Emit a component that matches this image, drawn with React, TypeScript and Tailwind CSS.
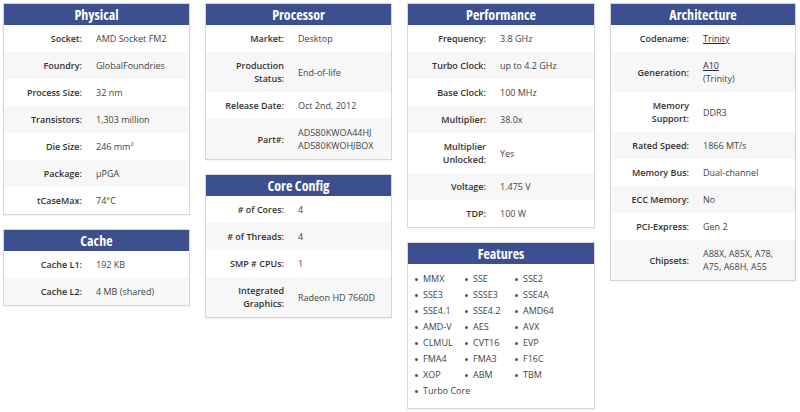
import type { ReactNode } from "react"

type Row = [ReactNode, ReactNode]

const physical: Row[] = [
  ["Socket:", "AMD Socket FM2"],
  ["Foundry:", "GlobalFoundries"],
  ["Process Size:", "32 nm"],
  ["Transistors:", "1,303 million"],
  ["Die Size:", "246 mm²"],
  ["Package:", "µPGA"],
  ["tCaseMax:", "74°C"],
]

const cache: Row[] = [
  ["Cache L1:", "192 KB"],
  ["Cache L2:", "4 MB (shared)"],
]

const processor: Row[] = [
  ["Market:", "Desktop"],
  [<>Production<br />Status:</>, "End-of-life"],
  ["Release Date:", "Oct 2nd, 2012"],
  ["Part#:", <>AD580KWOA44HJ<br />AD580KWOHJBOX</>],
]

const coreConfig: Row[] = [
  ["# of Cores:", "4"],
  ["# of Threads:", "4"],
  ["SMP # CPUs:", "1"],
  [<>Integrated<br />Graphics:</>, "Radeon HD 7660D"],
]

const performance: Row[] = [
  ["Frequency:", "3.8 GHz"],
  ["Turbo Clock:", "up to 4.2 GHz"],
  ["Base Clock:", "100 MHz"],
  ["Multiplier:", "38.0x"],
  [<>Multiplier<br />Unlocked:</>, "Yes"],
  ["Voltage:", "1.475 V"],
  ["TDP:", "100 W"],
]

const architecture: Row[] = [
  ["Codename:", <a className="underline text-[#2b2b3b]">Trinity</a>],
  ["Generation:", <><a className="underline text-[#2b2b3b]">A10</a><br />(Trinity)</>],
  [<>Memory<br />Support:</>, "DDR3"],
  ["Rated Speed:", "1866 MT/s"],
  ["Memory Bus:", "Dual-channel"],
  ["ECC Memory:", "No"],
  ["PCI-Express:", "Gen 2"],
  ["Chipsets:", <>A88X, A85X, A78,<br />A75, A68H, A55</>],
]

const features = [
  "MMX", "SSE", "SSE2",
  "SSE3", "SSSE3", "SSE4A",
  "SSE4.1", "SSE4.2", "AMD64",
  "AMD-V", "AES", "AVX",
  "CLMUL", "CVT16", "EVP",
  "FMA4", "FMA3", "F16C",
  "XOP", "ABM", "TBM",
  "Turbo Core",
]

function Panel({ title, children }: { title: string; children: ReactNode }) {
  return (
    <section className="border border-[#d6d6d6] bg-white shadow-[0_1px_2px_rgba(0,0,0,0.06)]">
      <h2 className="h-[21px] bg-[#3c4f8e] text-center text-[14px] font-bold leading-[21px] text-white [font-stretch:75%]">
        {title}
      </h2>
      {children}
    </section>
  )
}

function SpecTable({ title, rows }: { title: string; rows: Row[] }) {
  return (
    <Panel title={title}>
      {rows.map(([label, value], i) => (
        <div
          key={i}
          className={`flex items-center py-[7px] text-[9px] leading-[13px] ${i % 2 ? "bg-[#f7f7f7]" : "bg-white"}`}
        >
          <div className="w-[86px] shrink-0 pr-[8px] text-right font-semibold text-[#333]">{label}</div>
          <div className="pl-[6px] text-[#444]">{value}</div>
        </div>
      ))}
    </Panel>
  )
}

export default function App() {
  return (
    <div className="flex h-[412px] w-[800px] items-start gap-[15px] bg-white pl-[3px] pt-[3px] font-['Open_Sans',sans-serif]">
      <div className="flex w-[187px] flex-col gap-[14px]">
        <SpecTable title="Physical" rows={physical} />
        <SpecTable title="Cache" rows={cache} />
      </div>
      <div className="flex w-[187px] flex-col gap-[14px]">
        <SpecTable title="Processor" rows={processor} />
        <SpecTable title="Core Config" rows={coreConfig} />
      </div>
      <div className="flex w-[188px] flex-col gap-[14px]">
        <SpecTable title="Performance" rows={performance} />
        <Panel title="Features">
          <ul className="grid grid-cols-[50px_50px_50px] pb-[9px] pl-[7px] pt-[7px] text-[9px] leading-[16px] text-[#444]">
            {features.map((f) => (
              <li key={f} className="flex items-center gap-[5px] whitespace-nowrap">
                <span className="h-[3px] w-[3px] shrink-0 rounded-full bg-[#555]" />
                {f}
              </li>
            ))}
          </ul>
        </Panel>
      </div>
      <div className="flex w-[186px] flex-col gap-[14px]">
        <SpecTable title="Architecture" rows={architecture} />
      </div>
    </div>
  )
}
